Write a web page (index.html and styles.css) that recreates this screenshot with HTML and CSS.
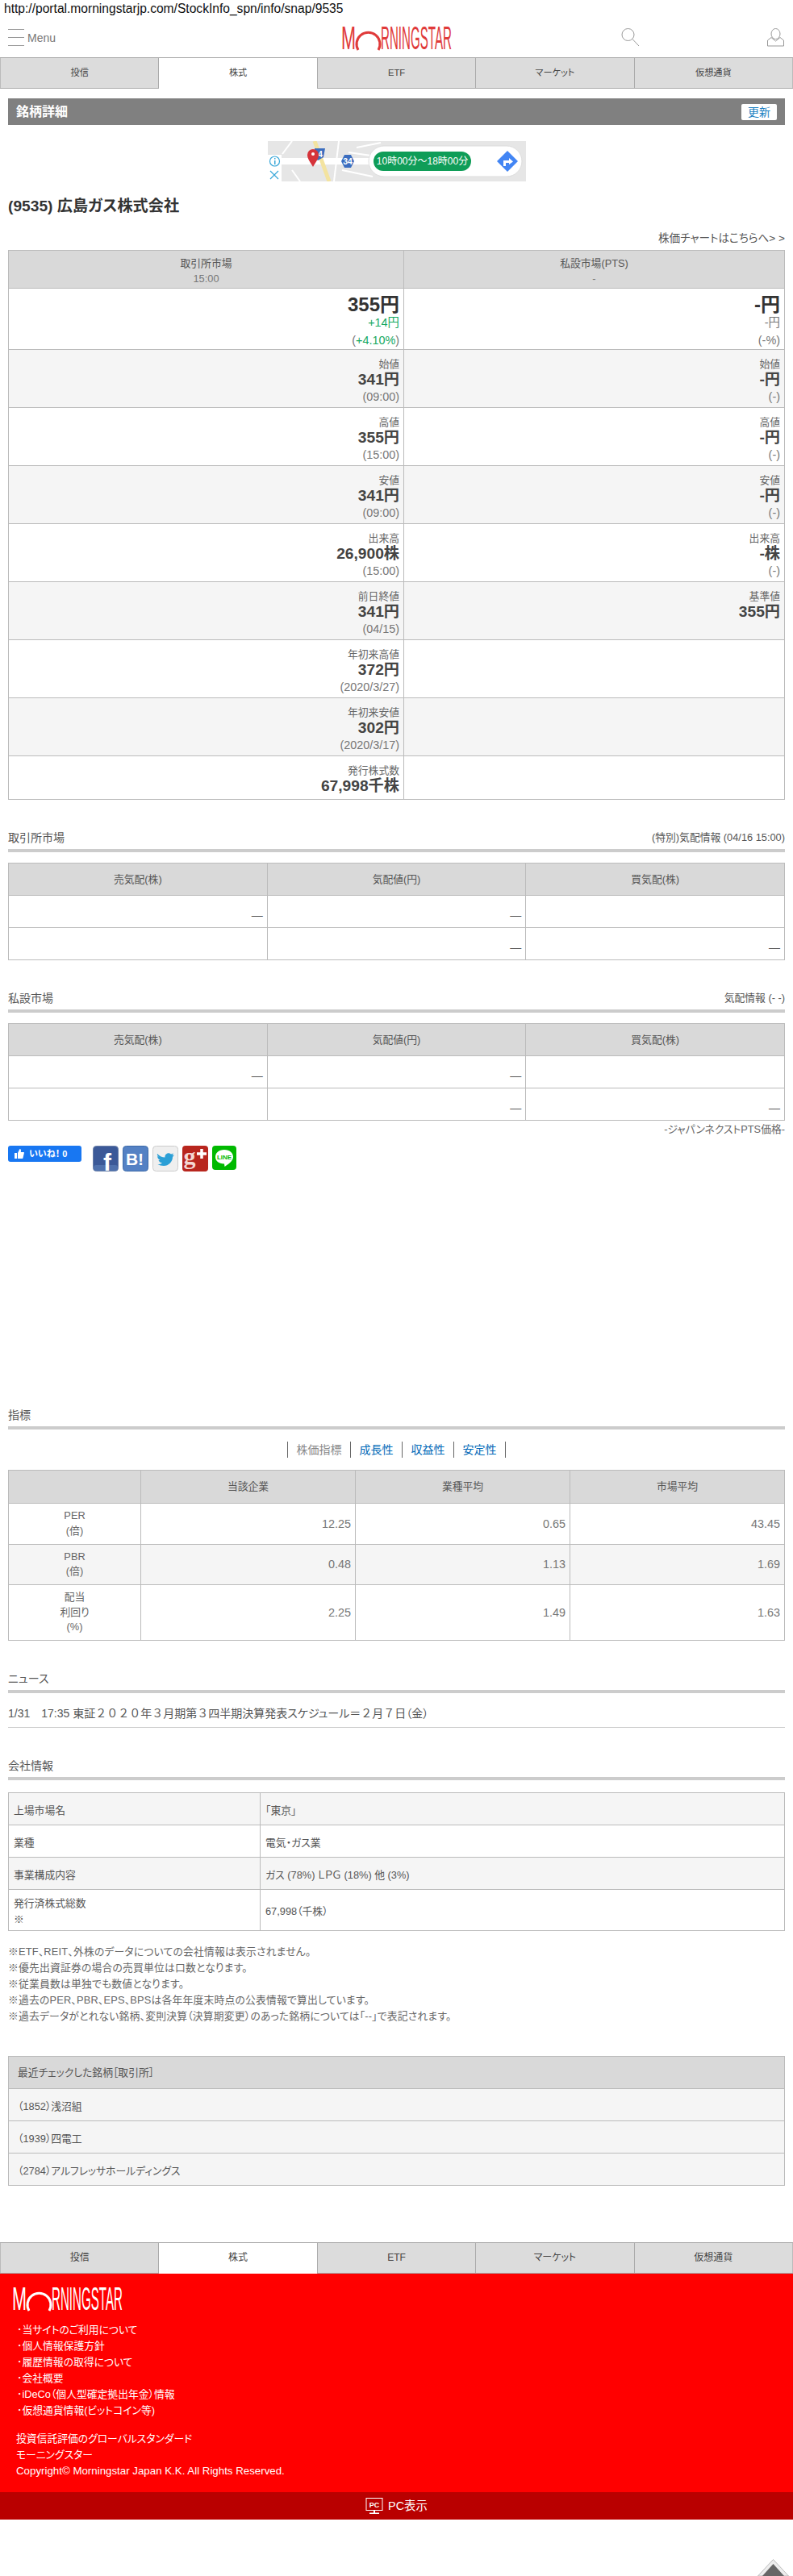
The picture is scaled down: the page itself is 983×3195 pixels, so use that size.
FILE: index.html
```html
<!DOCTYPE html>
<html lang="ja">
<head>
  <meta charset="UTF-8" />
  <title>銘柄詳細</title>
  <link rel="stylesheet" href="styles.css">
</head>
<body>
  <div class="url-line">http://portal.morningstarjp.com/StockInfo_spn/info/snap/9535</div>

  <div id="header">
    <div class="menu-btn">
      <span class="menu-bars"><i></i><i></i><i></i></span>
      <span>Menu</span>
    </div>
    <svg class="logo" viewBox="0 0 137 30" width="137" height="30">
      <text x="0" y="29" font-size="40" textLength="18" lengthAdjust="spacingAndGlyphs">M</text>
      <path d="M21 30 A14.500 14.500 0 1 1 46 30" fill="none" stroke-width="3"/>
      <text x="49" y="29" font-size="40" textLength="88" lengthAdjust="spacingAndGlyphs">RNINGSTAR</text>
    </svg>
    <div class="header-icons">
      <svg width="23" height="23" viewBox="0 0 23 23" fill="none" stroke="#999">
        <circle cx="8.500" cy="8" r="7.500"/><path d="M14 13.500 L22 22"/>
      </svg>
      <svg width="21" height="23" viewBox="0 0 21 23" fill="none" stroke="#999">
        <ellipse cx="10.500" cy="7" rx="5.500" ry="6.500"/>
        <path d="M0.500 22 V15 L5 11.500 L10.500 16 L16 11.500 L20.500 15 V22 Z"/>
      </svg>
    </div>
  </div>

  <div class="tabs">
    <a class="tab">投信</a>
    <a class="tab active">株式</a>
    <a class="tab">ETF</a>
    <a class="tab">マーケット</a>
    <a class="tab">仮想通貨</a>
  </div>

  <div id="content">
    <div class="title-bar">
      <h2>銘柄詳細</h2>
      <button class="update-btn">更新</button>
    </div>

    <svg class="ad" width="320" height="50" viewBox="0 0 320 50">
      <rect width="320" height="50" fill="#e6e6e6"/>
      <path d="M30 0 L18 16 M40 50 L30 36 M88 0 L82 50 M110 8 L140 2 M92 36 L130 44 M100 14 L128 18" stroke="#fff" stroke-width="2" fill="none"/>
      <rect x="0" y="21" width="130" height="8" fill="#fff"/>
      <path d="M58 0 L76 50" stroke="#f3e3a0" stroke-width="5"/>
      <rect width="17" height="50" y="17" fill="#fff"/>
      <circle cx="8.500" cy="25" r="6" fill="none" stroke="#39a7d8" stroke-width="1.200"/>
      <rect x="8" y="24" width="1.500" height="5" fill="#39a7d8"/><rect x="8" y="21" width="1.500" height="1.500" fill="#39a7d8"/>
      <path d="M3 37 L13 47 M13 37 L3 47" stroke="#39a7d8" stroke-width="1.200"/>
      <path d="M58 9 H71 L69 20 L62 24 L57 20 Z" fill="#3b6dbf"/>
      <text x="65" y="20" class="ad-num" font-size="10">4</text>
      <path d="M56 32 C52 25 49 22 49 17 A7 7 0 0 1 63 17 C63 22 60 25 56 32 Z" fill="#d5333a"/>
      <circle cx="56" cy="16" r="2" fill="#fff"/>
      <path d="M91 25 L95 17 H103 L107 25 L103 33 H95 Z" fill="#3b6dbf"/>
      <text x="99" y="29" class="ad-num" font-size="10.500">34</text>
      <path d="M264 44 h30 v6 h-30 Z" fill="#e6e6e6"/>
      <rect x="125" y="6" width="190" height="38" rx="19" fill="#fff" stroke="#ddd"/>
      <rect x="131" y="13" width="121" height="24" rx="12" fill="#0f9d58"/>
      <text x="191.500" y="29" class="ad-pill" font-size="12">10時00分〜18時00分</text>
      <path d="M297 12 L310 25 L297 38 L284 25 Z" fill="#4285f4"/>
      <path d="M292 31 V24 H299 V21 L304 25.500 L299 29 V27 H295 V31 Z" fill="#fff"/>
    </svg>

    <h1 class="stock-name">(9535) 広島ガス株式会社</h1>
    <div class="chart-link">株価チャートはこちらへ&gt; &gt;</div>

    <table class="price-table">
      <tr class="head">
        <th>取引所市場<div class="time">15:00</div></th>
        <th>私設市場(PTS)<div class="time">-</div></th>
      </tr>
      <tr class="top">
        <td><div class="big">355円</div><div class="change up">+14円</div><div class="sub">(<span class="up">+4.10%</span>)</div></td>
        <td><div class="big">-円</div><div class="change">-円</div><div class="sub">(-%)</div></td>
      </tr>
      <tr class="alt">
        <td><div class="lbl">始値</div><div class="val">341円</div><div class="sub">(09:00)</div></td>
        <td><div class="lbl">始値</div><div class="val">-円</div><div class="sub">(-)</div></td>
      </tr>
      <tr>
        <td><div class="lbl">高値</div><div class="val">355円</div><div class="sub">(15:00)</div></td>
        <td><div class="lbl">高値</div><div class="val">-円</div><div class="sub">(-)</div></td>
      </tr>
      <tr class="alt">
        <td><div class="lbl">安値</div><div class="val">341円</div><div class="sub">(09:00)</div></td>
        <td><div class="lbl">安値</div><div class="val">-円</div><div class="sub">(-)</div></td>
      </tr>
      <tr>
        <td><div class="lbl">出来高</div><div class="val">26,900株</div><div class="sub">(15:00)</div></td>
        <td><div class="lbl">出来高</div><div class="val">-株</div><div class="sub">(-)</div></td>
      </tr>
      <tr class="alt">
        <td><div class="lbl">前日終値</div><div class="val">341円</div><div class="sub">(04/15)</div></td>
        <td><div class="lbl">基準値</div><div class="val">355円</div></td>
      </tr>
      <tr>
        <td><div class="lbl">年初来高値</div><div class="val">372円</div><div class="sub">(2020/3/27)</div></td>
        <td></td>
      </tr>
      <tr class="alt">
        <td><div class="lbl">年初来安値</div><div class="val">302円</div><div class="sub">(2020/3/17)</div></td>
        <td></td>
      </tr>
      <tr class="last">
        <td><div class="lbl">発行株式数</div><div class="val">67,998千株</div></td>
        <td></td>
      </tr>
    </table>

    <div class="sec-head">
      <span class="sec-title">取引所市場</span>
      <span class="sec-note">(特別)気配情報 (04/16 15:00)</span>
    </div>
    <table class="quote-table">
      <tr><th>売気配(株)</th><th>気配値(円)</th><th>買気配(株)</th></tr>
      <tr><td>—</td><td>—</td><td></td></tr>
      <tr><td></td><td>—</td><td>—</td></tr>
    </table>

    <div class="sec-head">
      <span class="sec-title">私設市場</span>
      <span class="sec-note">気配情報 (- -)</span>
    </div>
    <table class="quote-table">
      <tr><th>売気配(株)</th><th>気配値(円)</th><th>買気配(株)</th></tr>
      <tr><td>—</td><td>—</td><td></td></tr>
      <tr><td></td><td>—</td><td>—</td></tr>
    </table>
    <div class="pts-note">-ジャパンネクストPTS価格-</div>

    <div class="share-row">
      <div class="like-btn">
        <svg width="12" height="12" viewBox="0 0 12 12" fill="#fff"><rect x="0" y="5" width="3" height="7"/><path d="M4 5 L6.500 0 C8 0 8.200 1.500 7.800 4 H11.500 C12 4 12 5 11.700 6 L10.500 11 C10.300 12 10 12 9 12 H4 Z"/></svg>
        <span>いいね！ 0</span>
      </div>
      <div class="share-icons">
        <svg width="32" height="32" viewBox="0 0 32 32">
          <rect x="0.500" y="0.500" width="31" height="31" rx="4" fill="#3b5998" stroke="#6a7fa8"/>
          <rect x="1" y="24" width="30" height="7" rx="3" fill="#4f71ad"/>
          <text x="18" y="31" class="sh-f" font-size="30">f</text>
        </svg>
        <svg width="32" height="32" viewBox="0 0 32 32">
          <rect x="0.500" y="0.500" width="31" height="31" rx="4" fill="#5481c4" stroke="#3d6aa8"/>
          <text x="15" y="24" class="sh-b" font-size="21">B!</text>
        </svg>
        <svg width="32" height="32" viewBox="0 0 32 32">
          <rect x="0.500" y="0.500" width="31" height="31" rx="4" fill="#efefef" stroke="#ccc"/>
          <path d="M6 10 C9 13 12 14.500 15.500 14.500 C15 10.500 19.500 7.500 23 10.500 L26 9.500 L24.500 12 L27 11.500 L25 14 C25 20 20 25 14 25 C11 25 8.500 24.300 6.500 23 C9 23 10.500 22.500 12 21.500 C9.500 21 8 19.500 7.500 18 L9.500 18 C7.500 17 6 15 6.200 13 L8 13.500 C6 12.500 5.500 11.500 6 10 Z" fill="#2b9fd6"/>
        </svg>
        <svg width="32" height="32" viewBox="0 0 32 32">
          <rect width="32" height="32" rx="4" fill="#b8261e"/>
          <text x="9" y="23" class="sh-g" font-size="30">g</text>
          <path d="M24 4 V16 M18 10 H30" stroke="#fff" stroke-width="3.500"/>
        </svg>
        <svg width="30" height="30" viewBox="0 0 30 30">
          <rect width="30" height="30" rx="4" fill="#00b900"/>
          <path d="M15 5 C22 5 26 9 26 14 C26 19 20 23 15.500 26 L15 22.500 C8 22.500 4 18.500 4 14 C4 9 8 5 15 5 Z" fill="#fff"/>
          <text x="15" y="17" class="sh-line" font-size="8">LINE</text>
        </svg>
      </div>
    </div>

    <div class="sec-head indicator-head">
      <span class="sec-title">指標</span>
    </div>
    <div class="sub-links">
      <span>株価指標</span>
      <a>成長性</a>
      <a>収益性</a>
      <a>安定性</a>
    </div>
    <table class="index-table">
      <tr><th></th><th>当該企業</th><th>業種平均</th><th>市場平均</th></tr>
      <tr><td class="name">PER<br>(倍)</td><td>12.25</td><td>0.65</td><td>43.45</td></tr>
      <tr class="alt"><td class="name">PBR<br>(倍)</td><td>0.48</td><td>1.13</td><td>1.69</td></tr>
      <tr><td class="name">配当<br>利回り<br>(%)</td><td>2.25</td><td>1.49</td><td>1.63</td></tr>
    </table>

    <div class="sec-head">
      <span class="sec-title">ニュース</span>
    </div>
    <div class="news-row">1/31　17:35 東証<span class="fw">２０２０</span>年<span class="fw">３</span>月期第<span class="fw">３</span>四半期決算発表スケジュール＝<span class="fw">２</span>月<span class="fw">７</span>日（金）</div>

    <div class="sec-head company-head">
      <span class="sec-title">会社情報</span>
    </div>
    <table class="company-table">
      <tr class="alt"><td class="key">上場市場名</td><td>「東京」</td></tr>
      <tr><td class="key">業種</td><td>電気・ガス業</td></tr>
      <tr class="alt"><td class="key">事業構成内容</td><td>ガス (78%) ＬＰＧ (18%) 他 (3%)</td></tr>
      <tr class="tall"><td class="key">発行済株式総数<br>※</td><td>67,998（千株）</td></tr>
    </table>

    <div class="notes">
      <div>※ETF、REIT、外株のデータについての会社情報は表示されません。</div>
      <div>※優先出資証券の場合の売買単位は口数となります。</div>
      <div>※従業員数は単独でも数値となります。</div>
      <div>※過去のPER、PBR、EPS、BPSは各年年度末時点の公表情報で算出しています。</div>
      <div>※過去データがとれない銘柄、変則決算（決算期変更）のあった銘柄については「--」で表記されます。</div>
    </div>

    <table class="recent-table">
      <tr><th>最近チェックした銘柄［取引所］</th></tr>
      <tr><td>（1852）浅沼組</td></tr>
      <tr><td>（1939）四電工</td></tr>
      <tr><td>（2784）アルフレッサホールディングス</td></tr>
    </table>
  </div>

  <div class="tabs tabs-bottom">
    <a class="tab">投信</a>
    <a class="tab active">株式</a>
    <a class="tab">ETF</a>
    <a class="tab">マーケット</a>
    <a class="tab">仮想通貨</a>
  </div>

  <div id="footer">
    <svg class="logo logo-white" viewBox="0 0 137 30" width="137" height="30">
      <text x="0" y="29" font-size="40" textLength="18" lengthAdjust="spacingAndGlyphs">M</text>
      <path d="M21 30 A14.500 14.500 0 1 1 46 30" fill="none" stroke-width="3"/>
      <text x="49" y="29" font-size="40" textLength="88" lengthAdjust="spacingAndGlyphs">RNINGSTAR</text>
    </svg>
    <ul class="foot-links">
      <li>･当サイトのご利用について</li>
      <li>･個人情報保護方針</li>
      <li>･履歴情報の取得について</li>
      <li>･会社概要</li>
      <li>･iDeCo（個人型確定拠出年金）情報</li>
      <li>･仮想通貨情報(ビットコイン等)</li>
    </ul>
    <div class="foot-copy">
      <div>投資信託評価のグローバルスタンダード</div>
      <div>モーニングスター</div>
      <div class="copyright">Copyright© Morningstar Japan K.K. All Rights Reserved.</div>
    </div>
  </div>
  <div class="pc-bar">
    <svg width="22" height="20" viewBox="0 0 22 20" fill="none" stroke="#fff">
      <rect x="1" y="0.500" width="20" height="15"/>
      <path d="M11 15.500 V18.500 M5 19.500 H17" stroke-width="2"/>
      <text x="11" y="12" class="pc-mark" font-size="9">PC</text>
    </svg>
    <span>PC表示</span>
  </div>

  <svg class="to-top" width="39" height="21" viewBox="0 0 39 21">
    <path d="M19.500 0.500 L38.500 21 H0.500 Z" fill="#eee" stroke="#bbb"/>
    <path d="M19.500 6 L33 21 H6 Z" fill="#666"/>
  </svg>
</body>
</html>
```

FILE: styles.css
```css
html, body {
  margin: 0;
  padding: 0;
}

body {
  position: relative;
  min-height: 100vh;
  font-family: "Liberation Sans", "Noto Sans CJK JP", sans-serif;
  font-feature-settings: "palt";
  font-size: 12.8px;
  line-height: 20px;
  color: #555;
  background: #fff;
}

.url-line {
  height: 22px;
  padding-left: 5px;
  font-size: 15.6px;
  line-height: 22px;
  color: #111;
}

#header {
  position: relative;
  display: flex;
  justify-content: space-between;
  align-items: center;
  height: 49px;
  padding: 0 11px 0 10px;
}

.menu-btn {
  display: flex;
  align-items: center;
  gap: 4px;
  font-size: 14px;
  color: #777;
}

.menu-bars {
  display: flex;
  flex-direction: column;
  justify-content: space-between;
  width: 20px;
  height: 21px;
}

.menu-bars i {
  display: block;
  height: 1px;
  background: #999;
}

.logo {
  display: block;
  overflow: visible;
}

.logo text {
  font-family: "Liberation Sans", sans-serif;
  fill: #e03a3a;
}

.logo path {
  stroke: #e03a3a;
}

#header .logo {
  position: absolute;
  left: 423px;
  top: 10px;
}

.logo-white text {
  fill: #fff;
}

.logo-white path {
  stroke: #fff;
}

.header-icons {
  display: flex;
  gap: 158px;
  align-items: center;
}

.tabs {
  display: flex;
  height: 39px;
  box-sizing: border-box;
  border-top: 1px solid #aaa;
  border-bottom: 1px solid #aaa;
  font-size: 11.2px;
  color: #444;
}

.tab {
  flex: 1;
  text-align: center;
  line-height: 36px;
  background: #dcdcdc;
  border-left: 1px solid #aaa;
}

.tab:first-child {
  border-left: 1px solid #bbb;
}

.tab:last-child {
  border-right: 1px solid #bbb;
}

.tab.active {
  background: #fff;
  margin-bottom: -1px;
}

#content {
  padding: 0 10px;
}

.title-bar {
  display: flex;
  justify-content: space-between;
  align-items: center;
  height: 33px;
  margin-top: 12px;
  padding: 0 10px;
  background: #808080;
}

.title-bar h2 {
  margin: 0;
  font-size: 16px;
  font-weight: bold;
  color: #fff;
}

.update-btn {
  width: 44px;
  height: 20px;
  padding: 0;
  border: none;
  border-radius: 2px;
  background: #fff;
  color: #1a7fc1;
  font: inherit;
  font-size: 14px;
  line-height: 20px;
}

.ad {
  display: block;
  margin: 20px auto 0;
}

.ad-num {
  font-family: "Liberation Sans", sans-serif;
  font-weight: bold;
  fill: #fff;
  text-anchor: middle;
}

.ad-pill {
  fill: #fff;
  text-anchor: middle;
}

.stock-name {
  margin: 15px 0 0;
  font-size: 19.2px;
  font-weight: bold;
  line-height: 32px;
  color: #333;
}

.chart-link {
  margin-top: 14px;
  height: 24px;
  font-size: 13.6px;
  line-height: 20px;
  text-align: right;
}

table {
  width: 100%;
  table-layout: fixed;
  border-collapse: collapse;
  border: 1px solid #bbb;
}

th, td {
  box-sizing: border-box;
  border: 1px solid #bbb;
  padding: 0 5px;
}

th {
  background: #d9d9d9;
  font-weight: normal;
  text-align: center;
}

.alt td {
  background: #f5f5f5;
}

.price-table th {
  height: 47px;
  padding-top: 4px;
  line-height: 18px;
  color: #555;
}

.price-table th:first-child {
  width: 490px;
}

.price-table .time {
  color: #777;
  line-height: 19px;
}

.price-table td {
  height: 72px;
  padding-top: 8px;
  vertical-align: top;
  text-align: right;
}

.price-table .top td {
  height: 76px;
}

.price-table .last td {
  height: 54px;
}

.lbl {
  font-size: 12.8px;
  line-height: 19px;
  color: #666;
}

.val {
  font-size: 19.2px;
  font-weight: bold;
  line-height: 20px;
  color: #444;
}

.big {
  font-size: 24px;
  font-weight: bold;
  line-height: 24px;
  color: #333;
}

.change {
  font-size: 14.4px;
  line-height: 21px;
  color: #777;
}

.sub {
  font-size: 14.4px;
  line-height: 22px;
  color: #777;
}

.up {
  color: #14a85f;
}

.sec-head {
  display: flex;
  justify-content: space-between;
  margin-top: 37px;
  margin-bottom: 13px;
  padding-bottom: 4px;
  border-bottom: 4px solid #ccc;
}

.sec-title {
  font-size: 14px;
  color: #555;
}

.sec-note {
  font-size: 12.8px;
}

.quote-table th, .quote-table td {
  height: 40px;
}

.quote-table td {
  padding-top: 8px;
  text-align: right;
  font-size: 14px;
}

.pts-note {
  margin-top: 1px;
  font-size: 12.8px;
  text-align: right;
  color: #666;
}

.share-row {
  display: flex;
  align-items: flex-start;
  gap: 14px;
  margin-top: 10px;
}

.like-btn {
  display: flex;
  align-items: center;
  gap: 6px;
  width: 91px;
  height: 20px;
  box-sizing: border-box;
  padding-left: 8px;
  border-radius: 3px;
  background: #1877f2;
  color: #fff;
  font-size: 11px;
  font-weight: bold;
}

.share-icons {
  display: flex;
  gap: 5px;
}

.share-icons svg {
  overflow: visible;
}

.sh-f {
  font-family: "Liberation Sans", sans-serif;
  font-weight: bold;
  fill: #fff;
  text-anchor: middle;
}

.sh-b {
  font-family: "Liberation Sans", sans-serif;
  font-weight: bold;
  fill: #fff;
  text-anchor: middle;
}

.sh-g {
  font-family: "Liberation Serif", serif;
  font-weight: bold;
  fill: #f4d8d4;
  text-anchor: middle;
}

.sh-line {
  font-family: "Liberation Sans", sans-serif;
  font-weight: bold;
  fill: #00b900;
  text-anchor: middle;
}

.indicator-head {
  margin-top: 292px;
  margin-bottom: 15px;
}

.sub-links {
  display: flex;
  justify-content: center;
  height: 20px;
  font-size: 14px;
  line-height: 20px;
}

.sub-links span, .sub-links a {
  padding: 0 10.500px;
  border-left: 1.500px solid #666;
  color: #888;
}

.sub-links a {
  color: #0068b7;
}

.sub-links a:last-child {
  border-right: 1.500px solid #666;
}

.index-table {
  margin-top: 15px;
}

.index-table th:first-child {
  width: 164px;
}

.index-table th {
  height: 41px;
}

.index-table td {
  height: 50.500px;
  text-align: right;
  font-size: 14.4px;
  color: #777;
}

.index-table td.name {
  text-align: center;
  font-size: 12.8px;
  line-height: 18.500px;
  color: #666;
}

.index-table tr:last-child td {
  height: 69px;
}

.news-row {
  margin-top: -13px;
  padding: 15px 0 7px;
  border-bottom: 1px solid #ccc;
  font-size: 14px;
}

.fw {
  font-feature-settings: normal;
}

.company-head {
  margin-top: 37px;
  margin-bottom: 15px;
}

.company-table td {
  height: 40px;
  padding: 4px 6px 0;
  font-size: 12.8px;
}

.company-table .key {
  width: 312px;
}

.company-table .tall td {
  height: 51px;
}

.notes {
  margin-top: 16px;
  font-size: 12.8px;
  letter-spacing: 0.2px;
  color: #666;
}

.recent-table {
  margin-top: 39px;
}

.recent-table th {
  height: 40px;
  padding-left: 11px;
  text-align: left;
}

.recent-table td {
  height: 40px;
  padding: 4px 0 0 11px;
  background: #f5f5f5;
}

.tabs-bottom {
  margin-top: 70px;
  font-size: 12px;
}

#footer {
  height: 271px;
  box-sizing: border-box;
  padding: 16px 0 0 15px;
  background: #f00;
  color: #fff;
}

.foot-links {
  list-style: none;
  margin: 14px 0 0;
  padding: 0 0 0 6px;
}

.foot-copy {
  margin-top: 15px;
  padding-left: 5px;
}

.copyright {
  font-size: 13.3px;
}

.pc-bar {
  display: flex;
  justify-content: center;
  align-items: center;
  gap: 6px;
  height: 34px;
  background: #b90000;
  color: #fff;
  font-size: 14.4px;
}

.pc-mark {
  font-family: "Liberation Sans", sans-serif;
  font-weight: bold;
  fill: #fff;
  stroke: none;
  text-anchor: middle;
}

.to-top {
  position: absolute;
  right: 5px;
  bottom: 0;
}
```
